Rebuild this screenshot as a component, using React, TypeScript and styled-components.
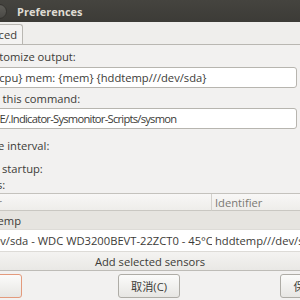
import React from 'react';
import styled, { createGlobalStyle } from 'styled-components';

const GlobalStyle = createGlobalStyle`
    html, body {
        margin: 0;
        padding: 0;
        width: 300px;
        height: 300px;
        overflow: hidden;
        background: #f2f1f0;
    }
    body {
        font-family: 'Open Sans', 'Noto Sans CJK SC', sans-serif;
        font-size: 11.2px;
        color: #3c3b37;
    }
`;

const Window = styled.div`
    width: 300px;
    height: 300px;
    display: flex;
    flex-direction: column;
    overflow: hidden;
`;

const TitleBar = styled.div`
    height: 22px;
    flex: none;
    display: flex;
    align-items: center;
    gap: 10px;
    background: linear-gradient(#45443f, #3c3b37);
`;

const WinButton = styled.span`
    width: 13px;
    height: 13px;
    margin-left: -8px;
    border-radius: 50%;
    background: linear-gradient(#5f5e59, #4a4945);
    border: 1px solid #33322e;
`;

const Title = styled.span`
    font-weight: bold;
    font-size: 11px;
    color: #dfdbd2;
`;

const TabBar = styled.div`
    height: 22px;
    flex: none;
    display: flex;
    align-items: flex-end;
    border-bottom: 1px solid #b9b7b2;
    background: #efeeec;
`;

const Tab = styled.div`
    height: 19px;
    margin-left: -40px;
    padding: 0 5px;
    display: flex;
    align-items: center;
    background: #f4f3f2;
    border: 1px solid #b9b7b2;
    border-bottom: none;
    border-radius: 3px 3px 0 0;
`;

const Panel = styled.div`
    flex: 1;
    display: flex;
    flex-direction: column;
    padding-right: 3px;
`;

const Label = styled.div<{ $h: number; $shift: number }>`
    height: ${({ $h }) => $h}px;
    flex: none;
    display: flex;
    align-items: center;
    margin-left: ${({ $shift }) => -$shift}px;
    white-space: nowrap;
`;

const Entry = styled.div<{ $shift: number; $tight?: boolean }>`
    height: 19px;
    flex: none;
    display: flex;
    align-items: center;
    margin-left: -40px;
    padding-left: ${({ $shift }) => 40 - $shift}px;
    background: #fff;
    border: 1px solid #b7b5af;
    border-radius: 3px;
    letter-spacing: ${({ $tight }) => ($tight ? '-0.75px' : 'normal')};
    white-space: nowrap;
    overflow: hidden;
`;

const Table = styled.div`
    flex: none;
    margin-left: -60px;
    margin-right: -3px;
    display: grid;
    grid-template-columns: 272px 1fr;
    border-top: 1px solid #c4c2bd;
`;

const HeadCell = styled.div<{ $pad: number; $last?: boolean }>`
    height: 16px;
    display: flex;
    align-items: center;
    padding-left: ${({ $pad }) => $pad}px;
    color: #7a7873;
    background: linear-gradient(#f8f7f6, #eeedea);
    border-bottom: 1px solid #c9c7c2;
    border-right: ${({ $last }) => ($last ? 'none' : '1px solid #d3d1cc')};
    white-space: nowrap;
    overflow: hidden;
`;

const Cell = styled.div<{ $pad: number; $h: number; $group?: boolean }>`
    height: ${({ $h }) => $h}px;
    display: flex;
    align-items: center;
    padding-left: ${({ $pad }) => $pad}px;
    background: ${({ $group }) => ($group ? '#e6e4e0' : '#ffffff')};
    border-bottom: 1px solid #dddbd7;
    white-space: nowrap;
    overflow: hidden;
`;

const AddButton = styled.div`
    height: 18px;
    flex: none;
    margin-right: -3px;
    display: flex;
    align-items: center;
    justify-content: center;
    background: linear-gradient(#f4f3f1, #e9e8e5);
    border-bottom: 1px solid #bebcb7;
`;

const ButtonRow = styled.div`
    height: 30px;
    flex: none;
    display: flex;
    align-items: flex-start;
    padding-top: 3px;
    box-sizing: border-box;
`;

const Button = styled.div<{ $w: number; $gap: number; $focus?: boolean }>`
    width: ${({ $w }) => $w}px;
    height: 24px;
    flex: none;
    box-sizing: border-box;
    margin-left: ${({ $gap }) => $gap}px;
    display: flex;
    align-items: center;
    justify-content: center;
    border: 1px solid ${({ $focus }) => ($focus ? '#e39a7c' : '#aeaca6')};
    border-radius: 3px;
    background: linear-gradient(#fbfbfa, #e7e6e3);
    white-space: nowrap;
`;

export default function App() {
    return (
        <>
            <GlobalStyle />
            <Window>
                <TitleBar>
                    <WinButton />
                    <Title>Preferences</Title>
                </TitleBar>
                <TabBar>
                    <Tab>Advanced</Tab>
                </TabBar>
                <Panel>
                    <Label $h={22} $shift={20}>Customize output:</Label>
                    <Entry $shift={6}>{'{cpu} mem: {mem} {hddtemp///dev/sda}'}</Entry>
                    <Label $h={20} $shift={21}>Run this command:</Label>
                    <Entry $shift={32} $tight>
                        $HOME/.Indicator-Sysmonitor-Scripts/sysmon
                    </Entry>
                    <Label $h={32} $shift={34}>Update interval:</Label>
                    <Label $h={14} $shift={38}>Run on startup:</Label>
                    <Label $h={18} $shift={39}>Sensors:</Label>
                    <Table>
                        <HeadCell $pad={26}>Sensor</HeadCell>
                        <HeadCell $pad={3} $last>
                            Identifier
                        </HeadCell>
                        <Cell $h={18} $pad={33} $group>
                            hddtemp
                        </Cell>
                        <Cell $h={18} $pad={4} $group />
                        <Cell $h={21} $pad={43}>
                            /dev/sda - WDC WD3200BEVT-22ZCT0 - 45°C
                        </Cell>
                        <Cell $h={21} $pad={3}>
                            hddtemp///dev/sda
                        </Cell>
                    </Table>
                    <AddButton>Add selected sensors</AddButton>
                    <ButtonRow>
                        <Button $w={82} $gap={-60} $focus>
                            确定(O)
                        </Button>
                        <Button $w={62} $gap={96}>
                            取消(C)
                        </Button>
                        <Button $w={62} $gap={100}>
                            保存(S)
                        </Button>
                    </ButtonRow>
                </Panel>
            </Window>
        </>
    );
}
